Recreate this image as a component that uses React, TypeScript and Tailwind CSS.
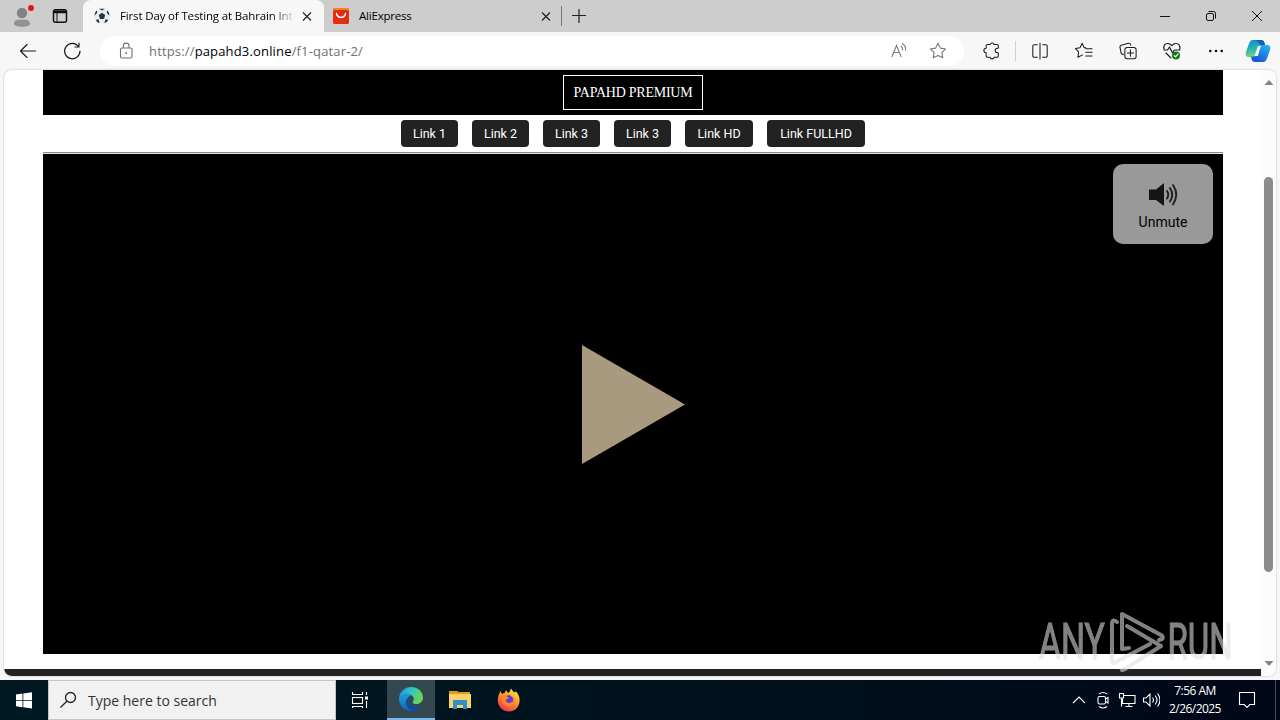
import type { ReactNode } from "react";

const links = ["Link 1", "Link 2", "Link 3", "Link 3", "Link HD", "Link FULLHD"];

export default function App() {
  return (
    <div className="flex h-[720px] w-[1280px] flex-col overflow-hidden bg-[#f7f7f7] font-['Open_Sans',sans-serif] text-black">
      <TabStrip />
      <Toolbar />

      {/* Page viewport */}
      <div className="h-[610px] px-1 pb-1">
        <div className="flex h-[606px] overflow-hidden rounded-lg bg-white shadow-[0_0_2px_rgba(0,0,0,0.3)]">
          <div className="flex w-[1257px] flex-col">
            <main className="ml-[39px] flex w-[1180px] flex-col">
              <header className="flex h-[45px] items-center justify-center bg-black">
                <div className="flex h-[35px] w-[140px] items-center justify-center border border-white font-['Liberation_Serif',serif] text-[14px] text-white">
                  <span className="whitespace-nowrap tracking-[-0.25px]">PAPAHD PREMIUM</span>
                </div>
              </header>

              <nav className="flex h-[37px] justify-center gap-3.5 pt-[5px]">
                {links.map((label, i) => (
                  <LinkButton key={i} label={label} />
                ))}
              </nav>

              <div className="h-[2px] border-t border-[#8a8a8a] bg-[#e5e5e5]" />
              <Player />
            </main>
            <div className="mt-[15px] h-[7px] rounded-bl-lg bg-[#222]" />
          </div>
          <ScrollBar />
        </div>
      </div>

      <Taskbar />
    </div>
  );
}

/* ---------------- Browser chrome ---------------- */

function TabStrip() {
  return (
    <div className="flex h-8 shrink-0 bg-[#cdcdcd]">
      <div className="flex w-[83px] items-center">
        <svg className="ml-2.5" width="26" height="28" viewBox="0 0 26 28">
          <circle cx="12" cy="11" r="5.2" fill="#838383" />
          <path d="M4 22c0-3.300 2.400-4.200 5-4.200h6c2.800 0 5 .900 5 4.200 0 1.500-3.500 2.800-8 2.800s-8-1.300-8-2.800Z" fill="#929292" />
          <circle cx="21" cy="6" r="3" fill="#e5161b" />
        </svg>
        <svg className="ml-4" width="16" height="16" viewBox="0 0 16 16" fill="none" stroke="#111" strokeWidth="1.5">
          <rect x="1.500" y="1.800" width="13" height="12.400" rx="2" />
          <path d="M2 3.300h12M2 4.600h12" />
          <path d="M5 4v10" strokeWidth="1" />
        </svg>
      </div>

      <div className="flex w-[241px] items-center rounded-t-lg bg-[#f7f7f7] pl-[11px]">
        <SoccerBall />
        <span className="ml-[10px] w-[173px] overflow-hidden bg-linear-to-r from-black from-85% to-[#dedede] bg-clip-text text-[11.5px] tracking-[-0.15px] whitespace-nowrap text-transparent">
          First Day of Testing at Bahrain Int
        </span>
        <Cross className="ml-[9px]" />
      </div>

      <div className="flex w-[238px] items-center border-r border-[#858585] [border-image:linear-gradient(to_bottom,transparent_20%,#777_20%,#777_80%,transparent_80%)_1] pl-[9px]">
        <svg width="16" height="16" viewBox="0 0 16 16">
          <rect width="16" height="16" rx="2" fill="#e52b10" />
          <path d="M0 4V2q0-2 2-2h12q2 0 2 2v2Z" fill="#f08a16" />
          <rect y="2" width="16" height="14" rx="2" fill="#e52b10" />
          <path d="M3.500 5.500c1 5.200 8 5.200 9 0" fill="none" stroke="#fff" strokeWidth="1.400" strokeLinecap="round" />
        </svg>
        <span className="ml-[10px] w-[182px] text-[11.500px] tracking-[-0.2px]">AliExpress</span>
        <Cross />
      </div>
      <svg className="mt-2 ml-[9px]" width="16" height="16" viewBox="0 0 16 16" stroke="#222" strokeWidth="1.200">
        <path d="M8 1v14M1 7.500h14" />
      </svg>

      <div className="ml-auto flex">
        <WindowButton><path d="M3 8.500h10" /></WindowButton>
        <WindowButton>
          <rect x="3.500" y="5.500" width="7" height="7" rx="1.500" />
          <path d="M5.500 3.500h5q2 0 2 2v5" />
        </WindowButton>
        <WindowButton><path d="m3 3 10 10M13 3 3 13" /></WindowButton>
      </div>
    </div>
  );
}

function WindowButton({ children }: { children: ReactNode }) {
  return (
    <div className="flex h-8 w-[46px] items-center justify-center">
      <svg width="16" height="16" viewBox="0 0 16 16" fill="none" stroke="#111" strokeWidth="1">
        {children}
      </svg>
    </div>
  );
}

function Cross({ className = "" }: { className?: string }) {
  return (
    <svg className={className} width="10" height="10" viewBox="0 0 10 10" stroke="#222" strokeWidth="1.200">
      <path d="m1 1.500 8 8M9 1.500l-8 8" />
    </svg>
  );
}

function SoccerBall() {
  return (
    <svg width="16" height="16" viewBox="0 0 16 16">
      <circle cx="8" cy="8" r="7.700" fill="#e8edf1" />
      <g fill="#28343d">
        <path d="m8 4.800 3.200 2.300L10 10.900H6L4.800 7.100Z" />
        <path d="M5.200.700h5.600L8 2.500ZM.300 7.700l1-3.500 1.700-2 .1 2.800ZM15.700 7.700l-1-3.500-1.700-2-.1 2.800ZM1.600 11.700l3.100-.3.800 3.900q-2.500-.9-3.900-3.600ZM14.400 11.700l-3.100-.3-.8 3.900q2.500-.9 3.900-3.600Z" />
      </g>
    </svg>
  );
}

function ToolButton({ children, size = 20 }: { children: ReactNode; size?: number }) {
  return (
    <div className="flex w-11 shrink-0 items-center justify-center">
      <svg width={size} height={size} viewBox="0 0 20 20" fill="none" stroke="#1b1b1b" strokeWidth="1.150" strokeLinecap="round" strokeLinejoin="round">
        {children}
      </svg>
    </div>
  );
}

function Toolbar() {
  return (
    <div className="flex h-[38px] shrink-0 items-center bg-[#f7f7f7] pl-1.5">
      <ToolButton><path d="M17.500 10H2.500M9 3.500 2.500 10 9 16.500" /></ToolButton>
      <ToolButton>
        <path d="M16.500 5.500A7.700 7.700 0 1 0 18 10M17 2v4h-4" />
      </ToolButton>

      <div className="ml-1.5 flex h-[30px] w-[864px] items-center rounded-full bg-white pl-[18px] text-[#707070]">
        <svg width="16" height="18" viewBox="0 0 16 18" fill="none" stroke="#707070" strokeWidth="1.100">
          <rect x="2.500" y="6" width="11.500" height="10" rx="1.500" />
          <path d="M5.300 6V4a2.900 2.900 0 0 1 5.800 0v2" />
          <circle cx="8.200" cy="11" r=".9" fill="#707070" stroke="none" />
        </svg>
        <span className="ml-[15px] w-[728px] pt-px text-[13px] tracking-[0.16px] whitespace-nowrap">
          https://<span className="text-black">papahd3.online</span>/f1-qatar-2/
        </span>
        <svg className="ml-[13px]" width="18" height="18" viewBox="0 0 18 18" fill="none" stroke="#808080" strokeWidth="1.200" strokeLinecap="round">
          <path d="m2 14.500 4.500-11 4.500 11M3.800 10.500h5.500M11 4.300q2 1.300 1.500 3.500M12.500 1.700q3.700 2.500 3 6.300" />
        </svg>
        <svg className="ml-[21px]" width="18" height="18" viewBox="0 0 20 20" fill="none" stroke="#777" strokeWidth="1.200" strokeLinejoin="round">
          <path d="m10 1.500 2.600 5.300 5.900.900-4.200 4.100 1 5.800-5.300-2.700-5.300 2.700 1-5.800-4.200-4.100 5.900-.900Z" />
        </svg>
      </div>

      <div className="ml-1.5 flex h-5 border-r border-[#d0d0d0]">
        <ToolButton size={18}>
          <path d="M5 2.800h3a2.200 2.200 0 0 1 4.300 0h3.200q1.500 0 1.500 1.500V7h-1a2.500 2.500 0 0 0 0 5h1v3.500q0 1.500-1.500 1.500h-3.200a2.200 2.200 0 0 1-4.300 0H5q-1.500 0-1.500-1.500V12a2.500 2.500 0 0 1 0-5V4.300Q3.500 2.800 5 2.800Z" />
        </ToolButton>
        <span className="w-[1px]" />
      </div>
      <div className="ml-0.5 flex">
        <ToolButton size={18}>
          <path d="M7 3H3.500Q2 3 2 4.500v11Q2 17 3.500 17H7M13 3h3.500Q18 3 18 4.500v11q0 1.500-1.500 1.500H13M10 1v18" />
        </ToolButton>
        <ToolButton size={18}>
          <path d="M12 6.500 10.200 6.300 8 1.500 5.500 6.500l-5 .8L4 11l-.8 6 5.300-2.700M12 7.500h7M12 11.500h7M12 15.500h7" />
        </ToolButton>
        <ToolButton size={18}>
          <path d="M5 14 2.500 13 1 5.500Q1 4 2.500 3.500l8-2q2-.5 2.500 2" />
          <rect x="6.500" y="6" width="12.500" height="12.500" rx="2.500" />
          <path d="M12.700 8.700v7M9.200 12.200h7" />
        </ToolButton>
        <ToolButton size={20}>
          <path d="M2 8c-.8-3.500 1-5.500 3.500-5.500 2 0 3.200.8 4.300 2.200 1-1.400 2.200-2.200 4.200-2.200 2.500 0 4.500 2 3.700 5.500M2 9h3.500l2-3 3 6 1.800-3H18M4 12l5 5" />
          <circle cx="14" cy="14.500" r="4" fill="#147b16" stroke="none" />
          <path d="m12.300 14.700 1.200 1.200 2.400-2.700" stroke="#fff" />
        </ToolButton>
        <ToolButton>
          <g fill="#111" stroke="none">
            <circle cx="4.300" cy="10" r="1.300" />
            <circle cx="10" cy="10" r="1.300" />
            <circle cx="15.700" cy="10" r="1.300" />
          </g>
        </ToolButton>
      </div>
      <CopilotIcon />
    </div>
  );
}

function CopilotIcon() {
  return (
    <svg className="ml-[7px]" width="26" height="24" viewBox="0 0 26 24">
      <defs>
        <linearGradient id="copilotLeft" x1="0" y1="0" x2=".2" y2="1">
          <stop stopColor="#148bbd" />
          <stop offset=".5" stopColor="#20afc0" />
          <stop offset="1" stopColor="#77d570" />
        </linearGradient>
        <linearGradient id="copilotRight" x1="1" y1="0" x2=".3" y2="1">
          <stop stopColor="#29b9f3" />
          <stop offset="1" stopColor="#1555d2" />
        </linearGradient>
      </defs>
      <path d="M8 1h8c2 0 3 1 3.500 3l.8 2.500h-3c-2 0-2.800 1-3.500 3l-2 5.500c-.7 2-1.500 3-3.500 3H4c-3 0-4-2-3-5l3-8.500C5 2 6 1 8 1Z" fill="url(#copilotLeft)" />
      <path d="M18 23h-8c-2 0-3-1-3.500-3L6 17.500h2.500c2 0 2.800-1 3.500-3L14 9c.7-2 1.500-3 3.500-3H22c3 0 4 2 3 5l-3 8.500c-1 2.500-2 3.500-4 3.500Z" fill="url(#copilotRight)" />
      <path d="M13 7h3l-3.200 10H9.500Z" fill="#f7f7f7" />
      <path d="M9 1h7c2 0 3 1 3.500 3l.6 2H16c-2-1-2-4-7-5Z" fill="#1859bd" />
    </svg>
  );
}

/* ---------------- Page ---------------- */

function LinkButton({ label }: { label: string }) {
  const width = label === "Link HD" ? "w-[68px]" : label === "Link FULLHD" ? "w-[98px]" : "w-[57px]";
  return (
    <button className={`flex h-[27px] items-center justify-center rounded bg-[#222] pt-px font-['Roboto',sans-serif] text-[12.500px] whitespace-nowrap text-white ${width}`}>
      {label}
    </button>
  );
}

function Player() {
  return (
    <div className="relative flex h-[500px] items-center justify-center bg-black">
      <svg width="104" height="120" viewBox="0 0 104 120">
        <path d="M1 1v119L104 60.500Z" fill="#a8997f" />
      </svg>
      <button className="absolute top-2.5 right-2.5 flex h-20 w-[100px] flex-col items-center rounded-[10px] bg-[#999] pt-[18px] font-['Roboto',sans-serif] text-[14px]">
        <svg width="30" height="26" viewBox="0 0 30 26" fill="none" stroke="#222" strokeWidth="2" strokeLinecap="round">
          <path d="M1 7.500h7L16 1v23l-8-6H1Z" fill="#151515" stroke="none" />
          <path d="M19 9q2.500 3.500 0 7.500M22 6q4.500 6.500 0 13.500M25 3q6.500 9.500 0 19.500" />
        </svg>
        <span className="mt-1 leading-5">Unmute</span>
      </button>

      {/* Watermark */}
      <svg className="absolute top-[450px] left-[990px] overflow-visible" width="210" height="74" viewBox="0 0 210 74" fill="none">
        <g opacity=".58">
          <g fill="#e0e0e0" stroke="#e0e0e0" strokeWidth="1.200" fontFamily="Roboto, sans-serif" fontSize="50">
            <text transform="translate(6 54.500) scale(0.675 1)">ANY</text>
            <text transform="translate(134.500 54.500) scale(0.66 1)">RUN</text>
          </g>
          <path
            d="M84 18Q79 14 79 20v34M89 45V10l39 21q3 2 1 4l-3 1M94 22l34 20-36 23-3 1M89 45l7-1M117 40 81 59q-2 1-2-5"
            stroke="#e0e0e0"
            strokeWidth="4"
            strokeLinejoin="round"
            strokeLinecap="round"
          />
        </g>
      </svg>
    </div>
  );
}

function ScrollBar() {
  return (
    <div className="flex w-[15px] flex-col items-center bg-[#fcfcfc]">
      <svg className="mt-2.5" width="10" height="6" viewBox="0 0 10 6"><path d="m5 0 4.500 5H.500Z" fill="#858585" /></svg>
      <div className="mt-[91px] h-[395px] w-[9px] rounded-full bg-[#8b8b8b]" />
      <svg className="mt-[89px]" width="10" height="6" viewBox="0 0 10 6"><path d="m5 5 4.500-5H.500Z" fill="#858585" /></svg>
    </div>
  );
}

/* ---------------- Taskbar ---------------- */

function Taskbar() {
  return (
    <div className="flex h-10 shrink-0 bg-linear-to-r from-[#001821] via-[#00131e] to-[#000719] text-white">
      <div className="flex w-12 items-center justify-center">
        <svg width="16" height="17" viewBox="0 0 16 17" fill="#fff">
          <path d="M0 2.500 6.500 1.600V8H0ZM7.300 1.500 16 .300V8H7.300ZM0 8.800h6.500v6.400L0 14.300ZM7.300 8.800H16v7.700l-8.700-1.200Z" />
        </svg>
      </div>
      <div className="flex w-[288px] items-center border border-[#c5c5c5] bg-[#f1f1f1] pl-2.5 text-[#333]">
        <svg width="18" height="18" viewBox="0 0 18 18" fill="none" stroke="#222" strokeWidth="1.300">
          <circle cx="11.500" cy="6.500" r="5" />
          <path d="m8 10-6.500 6.500" />
        </svg>
        <span className="ml-[11px] text-[14px] whitespace-nowrap">Type here to search</span>
      </div>
      <div className="mr-[3px] flex w-12 items-center justify-center">
        <svg width="18" height="18" viewBox="0 0 18 18" fill="none" stroke="#fff" strokeWidth="1.100">
          <rect x="1.500" y="6.500" width="10" height="6" />
          <path d="M1.500 1v2.500h10V1M1.500 17v-1.500h10V17M15.500 1v3M15.500 10v7" />
          <path d="M14 5.500h3v3h-3Z" fill="#fff" stroke="none" />
        </svg>
      </div>
      <div className="flex w-12 items-center justify-center border-b-2 border-[#76b9ed] bg-[#344850]"><EdgeIcon /></div>
      <div className="ml-px flex w-12 items-center justify-center"><FolderIcon /></div>
      <div className="ml-px flex w-12 items-center justify-center"><FirefoxIcon /></div>

      <div className="ml-auto flex items-center">
        <TrayIcon><path d="m3 12 6-6 6 6" /></TrayIcon>
        <TrayIcon>
          <rect x="4" y="5.500" width="7.500" height="7.500" rx="1.500" />
          <path d="m11.500 8 2.500-1.500v5.500l-2.500-1.500M5 3q4-3 8 0M5 15.500q4 3 8 0" />
        </TrayIcon>
        <TrayIcon>
          <path d="M5.500 4.500H17v8H4.500V8M11 12.500v3M7.500 15.500h7M1.500 2.500h4V7h-4ZM3.500 7v8.500" />
        </TrayIcon>
        <TrayIcon>
          <path d="M1.500 7H4l4-4v12l-4-4H1.500ZM10.500 6.500q2 2.500 0 5M13 4.500q4 4.500 0 9M15.500 2.500q5 6.500 0 13" />
        </TrayIcon>
        <div className="flex w-16 flex-col items-center text-[12px] leading-[18px] tracking-[-0.55px] whitespace-nowrap">
          <span>7:56 AM</span>
          <span>2/26/2025</span>
        </div>
        <div className="flex w-10 justify-center">
          <svg width="18" height="18" viewBox="0 0 18 18" fill="none" stroke="#fff" strokeWidth="1.100">
            <path d="M1.500 1.500h15v12h-4.700L9 16.500l-2.800-3H1.500Z" />
          </svg>
        </div>
        <div className="ml-2 h-10 w-[5px] border-l border-[#47505c]" />
      </div>
    </div>
  );
}

function TrayIcon({ children }: { children: ReactNode }) {
  return (
    <div className="flex w-6 justify-center">
      <svg width="18" height="18" viewBox="0 0 18 18" fill="none" stroke="#fff" strokeWidth="1.100">{children}</svg>
    </div>
  );
}

function EdgeIcon() {
  return (
    <svg width="24" height="24" viewBox="0 0 24 24">
      <defs>
        <linearGradient id="edgeTop" x1="0" y1="0" x2="1" y2=".3">
          <stop stopColor="#218ed1" />
          <stop offset=".5" stopColor="#2bc3d1" />
          <stop offset="1" stopColor="#66d65a" />
        </linearGradient>
        <linearGradient id="edgeBody" x1="0" y1="0" x2="0" y2="1">
          <stop stopColor="#229ed8" />
          <stop offset="1" stopColor="#0b67bd" />
        </linearGradient>
      </defs>
      <path d="M0 11C1 4 6 0 12 0c7 0 12 5 12 10.500 0 4-3 6.500-6.500 6.500-3 0-4.500-1.200-3.500-2.600 3-4.400-3-9-8-6.400Q2 9 0 11Z" fill="url(#edgeTop)" />
      <path d="M0 11c3-5.500 10-6 13-2.500C9 8 8 12 9 15c2 5 8 6 13.500 3.500C20 22 16.500 24 12 24 5 24-.500 18 0 11Z" fill="url(#edgeBody)" />
      <path d="M12 9c-7 2-7 11 .5 14.800 4 .2 8-1.800 10-5.300-6 2.500-13 0-12.500-5 .1-2 1-3.500 2-4.500Z" fill="#124c92" />
    </svg>
  );
}

function FolderIcon() {
  return (
    <svg width="22" height="20" viewBox="0 0 22 20">
      <path d="M0 1h8l2 1h11v3H0Z" fill="#df9c1b" />
      <path d="M0 4h22v14H0Z" fill="#f8d36c" />
      <path d="M4 19v-8q0-1 1-1h12q1 0 1 1v8h-4v-4H8v4Z" fill="#348ec4" />
    </svg>
  );
}

function FirefoxIcon() {
  return (
    <svg width="24" height="24" viewBox="0 0 24 24">
      <defs>
        <linearGradient id="firefoxBody" x1=".8" y1="0" x2=".2" y2="1">
          <stop stopColor="#ffea43" />
          <stop offset=".5" stopColor="#ff8a22" />
          <stop offset="1" stopColor="#f02566" />
        </linearGradient>
      </defs>
      <path d="M3.500 3 5 6l3-1.500 1-2.500 2 3 1.500-1L14 .500l3 4 2-1c3 3 4 7 3.500 10C22 19.500 17.500 23.500 12 23.500S1.500 19.500.800 13.500C.500 10 1.500 7 3.500 3Z" fill="url(#firefoxBody)" />
      <circle cx="12" cy="12" r="4.500" fill="#7542e5" />
      <path d="M5 8c3-1 6 0 8 2-2 0-3 1-4.500 2 1 4 5 4 8 1 0 4-3 6-6 5.500C6 18 4 13 5 8Z" fill="#ff8a20" />
      <path d="M9.500 8q2-1.500 4 0l2 3-2.500 3q-2 1-4-1.500l3.500-2Z" fill="#6c38cb" />
    </svg>
  );
}
